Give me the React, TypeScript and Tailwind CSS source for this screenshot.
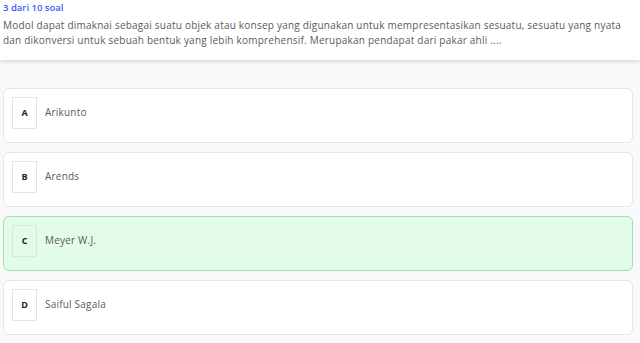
const options = [
  { key: 'A', label: 'Arikunto', selected: false },
  { key: 'B', label: 'Arends', selected: false },
  { key: 'C', label: 'Meyer W.J.', selected: true },
  { key: 'D', label: 'Saiful Sagala', selected: false },
];

export default function App() {
  return (
    <main
      className="min-h-screen bg-[#f8f9fa]"
      style={{ fontFamily: '"Open Sans", "Noto Sans", sans-serif' }}
    >
      <header className="h-[60px] bg-white px-[3px] pt-[1px] shadow-[0_2px_4px_rgba(0,0,0,0.12)]">
        <div className="text-[9.5px] font-semibold leading-[14px] text-[#3d5afe]">3 dari 10 soal</div>
        <p className="mt-[3px] whitespace-nowrap text-[10px] leading-[15px] tracking-[0.22px] text-[#5a5a5a]">
          Modol dapat dimaknai sebagai suatu objek atau konsep yang digunakan untuk mempresentasikan sesuatu, sesuatu yang nyata
          <br />
          dan dikonversi untuk sebuah bentuk yang lebih komprehensif. Merupakan pendapat dari pakar ahli ....
        </p>
      </header>

      <div className="flex flex-col gap-[9px] pl-[3px] pr-[7px] pt-[28px]">
        {options.map((o) => (
          <div
            key={o.key}
            className={
              o.selected
                ? 'flex h-[55px] items-start gap-[8px] rounded-[6px] border-[1.5px] border-[#9fe0b1] bg-[#e3fbe9] px-[8px] pt-[7.5px]'
                : 'flex h-[55px] items-start gap-[8px] rounded-[6px] border border-[#e6e6e6] bg-white px-[8px] pt-[8px]'
            }
          >
            <div
              className={
                o.selected
                  ? 'flex h-[32px] w-[25px] items-center justify-center border border-[#d9e8dc] text-[9px] font-bold text-[#222]'
                  : 'flex h-[32px] w-[25px] items-center justify-center border border-[#e3e3e3] bg-white text-[9px] font-bold text-[#222]'
              }
            >
              {o.key}
            </div>
            <span className="text-[10px] leading-[30px] tracking-[0.2px] text-[#5a5a5a]">{o.label}</span>
          </div>
        ))}
      </div>
    </main>
  );
}
